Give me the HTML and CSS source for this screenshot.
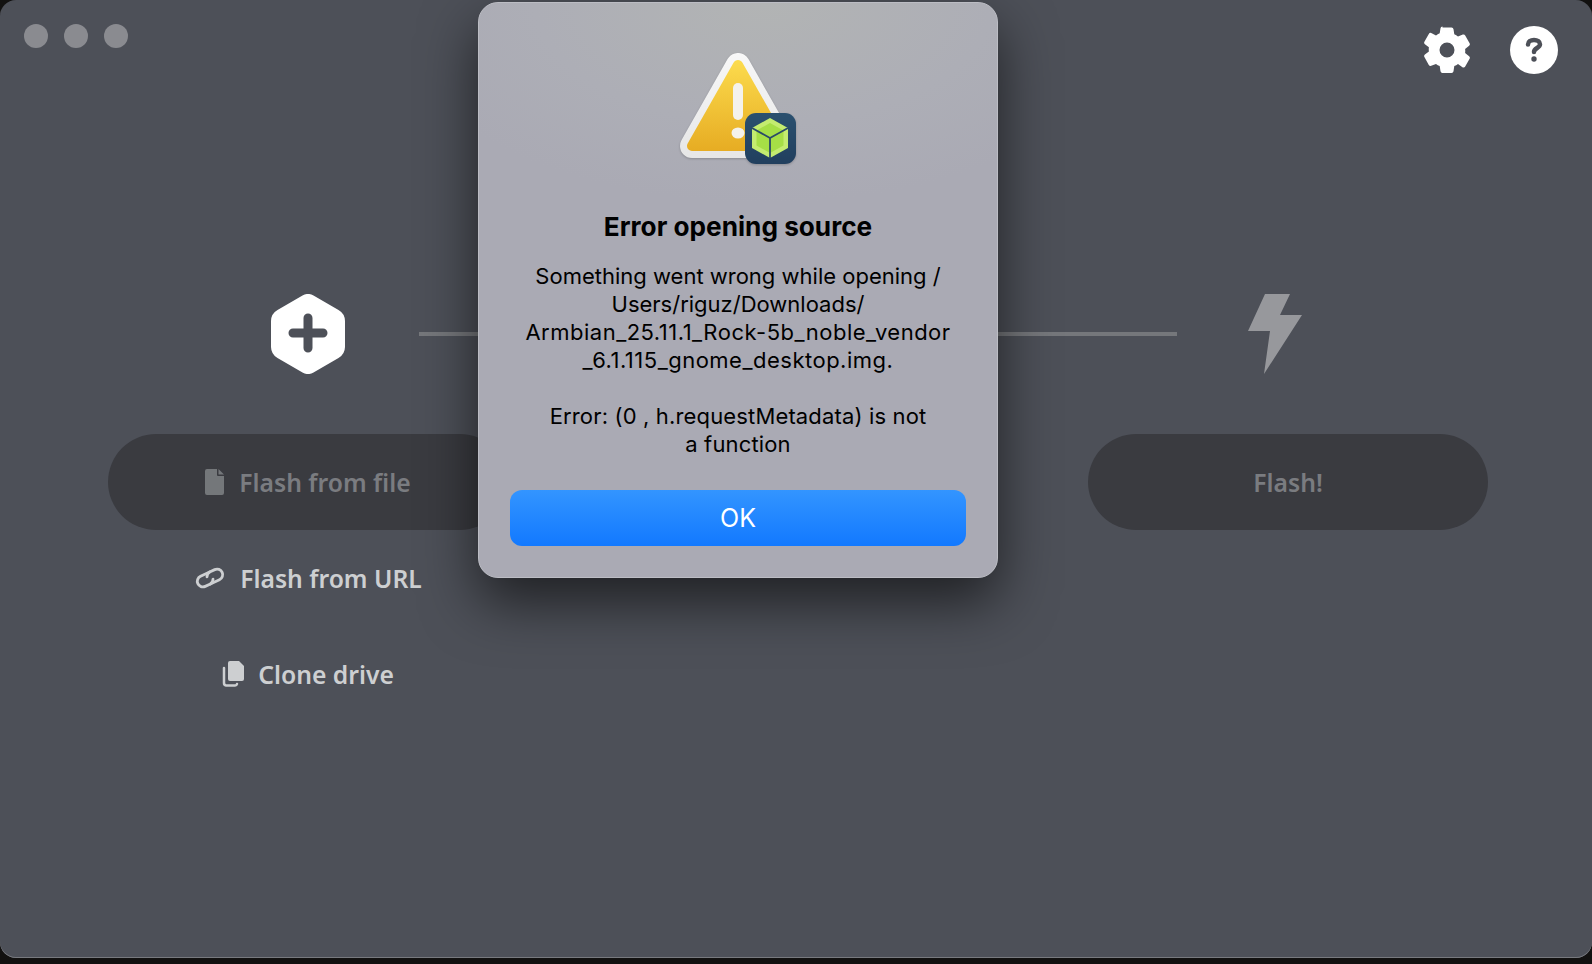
FILE: index.html
```html
<!DOCTYPE html>
<html>
<head>
    <meta charset="utf-8">
    <title>balenaEtcher</title>
    <link rel="stylesheet" href="styles.css">
</head>
<body>
    <div class="window">
        <div class="titlebar">
            <div class="traffic">
                <span class="light"></span>
                <span class="light"></span>
                <span class="light"></span>
            </div>
            <div class="tools">
                <svg class="gear" viewBox="0 0 46 48">
                    <path fill="#fff" fill-rule="evenodd" d="M18.5 1.5h9a2 2 0 0 1 2 1.700l.8 5.100c1.300.6 2.600 1.300 3.700 2.200l4.800-1.900a2 2 0 0 1 2.400.9l4.400 7.800a2 2 0 0 1-.5 2.500l-4 3.100a15 15 0 0 1 0 4.200l4 3.100a2 2 0 0 1 .5 2.500l-4.400 7.800a2 2 0 0 1-2.400.9L34 37.900c-1.100.9-2.400 1.600-3.700 2.200l-.8 5.100a2 2 0 0 1-2 1.700h-9a2 2 0 0 1-2-1.700l-.8-5.100c-1.300-.6-2.600-1.300-3.700-2.200l-4.800 1.900a2 2 0 0 1-2.400-.9L.4 31.100a2 2 0 0 1 .5-2.500l4-3.100a15 15 0 0 1 0-4.200l-4-3.100a2 2 0 0 1-.5-2.500l4.400-7.800a2 2 0 0 1 2.400-.9L12 9.500c1.100-.9 2.400-1.600 3.700-2.200l.8-5.100a2 2 0 0 1 2-1.700zM23 16.500a7.500 7.500 0 1 0 0 15 7.500 7.500 0 0 0 0-15z"/>
                </svg>
                <svg class="help" viewBox="0 0 48 48">
                    <circle cx="24" cy="24" r="24" fill="#fff"/>
                    <path fill="none" stroke="#4d5058" stroke-width="4.500" stroke-linecap="round" stroke-linejoin="round" d="M18 18.500c0-2.800 2.600-4.500 6-4.500s6 1.700 6 4.300c0 3.700-6 3.700-6 7.700"/>
                    <circle cx="24" cy="33" r="2.700" fill="#4d5058"/>
                </svg>
            </div>
        </div>

        <div class="icon-row">
            <svg class="hex" viewBox="0 0 74 80">
                <path fill="#fff" d="M31.500 1.500a11 11 0 0 1 11 0l25 14.500a13 13 0 0 1 6.500 11v26a13 13 0 0 1-6.500 11l-25 14.500a11 11 0 0 1-11 0l-25-14.500A13 13 0 0 1 0 53V27a13 13 0 0 1 6.500-11z"/>
                <path stroke="#4d5058" stroke-width="9" stroke-linecap="round" d="M37 24v30M22 39h30"/>
            </svg>
            <div class="line"></div>
            <svg class="bolt" viewBox="0 0 54 80">
                <path fill="#97989c" d="M17 0h25L32 21h22L16 80l6-43H0z"/>
            </svg>
        </div>

        <div class="pills">
            <div class="pill">
                <svg class="file-icon" viewBox="0 0 19 26">
                    <path fill="#74777a" d="M2 0h10v6a1 1 0 0 0 1 1h6v17a2 2 0 0 1-2 2H2a2 2 0 0 1-2-2V2a2 2 0 0 1 2-2z"/>
                    <path fill="#74777a" d="M13.500 0L19 5.500h-5.500z"/>
                </svg>
                <span>Flash from file</span>
            </div>
            <div class="pill">
                <span>Flash!</span>
            </div>
        </div>

        <div class="links">
            <div class="link">
                <svg class="link-icon" viewBox="0 0 32 26">
                    <g transform="translate(16 13) rotate(-25) scale(1.120)" fill="none" stroke="#cdcfd1" stroke-width="2.500" stroke-linecap="round">
                        <path d="M2-5H-7a5 5 0 0 0 0 10h5a5 5 0 0 0 4-3"/>
                        <path d="M-2 5H7a5 5 0 0 0 0-10H2a5 5 0 0 0-4 3"/>
                    </g>
                </svg>
                <span>Flash from URL</span>
            </div>
            <div class="link">
                <svg class="clone-icon" viewBox="0 0 22 26">
                    <path fill="#cdcfd1" d="M8 0h9l5 5v13a2 2 0 0 1-2 2H8a2 2 0 0 1-2-2V2a2 2 0 0 1 2-2z"/>
                    <path fill="none" stroke="#cdcfd1" stroke-width="2.500" stroke-linecap="round" d="M2 7v15a2.500 2.500 0 0 0 2 2.500h9a2 2 0 0 0 2-1.500"/>
                </svg>
                <span>Clone drive</span>
            </div>
        </div>
    </div>

    <div class="dialog">
        <svg class="alert-icon" viewBox="0 0 140 130">
            <defs>
                <linearGradient id="warn" gradientUnits="userSpaceOnUse" x1="0" y1="6" x2="0" y2="100">
                    <stop offset="0" stop-color="#fcdc4e"/>
                    <stop offset="1" stop-color="#e6ab22"/>
                </linearGradient>
                <linearGradient id="rim" gradientUnits="userSpaceOnUse" x1="0" y1="0" x2="0" y2="105">
                    <stop offset="0" stop-color="#f8f8f8"/>
                    <stop offset="1" stop-color="#e6e6e6"/>
                </linearGradient>
                <linearGradient id="tile" x1="0" y1="0" x2="0" y2="1">
                    <stop offset="0" stop-color="#2a506f"/>
                    <stop offset="1" stop-color="#213f5e"/>
                </linearGradient>
            </defs>
            <polygon points="70,12 116,93 24,93" fill="url(#rim)" stroke="url(#rim)" stroke-width="24" stroke-linejoin="round"/>
            <polygon points="70,12 116,93 24,93" fill="url(#warn)" stroke="url(#warn)" stroke-width="10" stroke-linejoin="round"/>
            <rect x="65" y="30" width="10" height="37" rx="5" fill="#f4f2ec"/>
            <ellipse cx="70" cy="80" rx="6.500" ry="5.500" fill="#f4f2ec"/>
            <rect x="77" y="60" width="51" height="51" rx="11" fill="url(#tile)"/>
            <path fill="#c4ec70" d="M102 65l18 10v20l-18 10-18-10V75z"/>
            <path fill="#a6df46" d="M102 70l13.500 7.500v15L102 100l-13.500-7.500v-15z"/>
            <path fill="none" stroke="#2a4a68" stroke-width="1.800" d="M84 75l18 10 18-10M102 85v20"/>
        </svg>
        <h1 class="dialog-title">Error opening source</h1>
        <p class="dialog-text">Something went wrong while opening /<br>Users/riguz/Downloads/<br><span class="path">Armbian_25.11.1_Rock-5b_noble_vendor<br>_6.1.115_gnome_desktop.img.</span><br><br><span class="error">Error: (0 , h.requestMetadata) is not<br>a function</span></p>
        <button class="dialog-btn">OK</button>
    </div>
</body>
</html>
```

FILE: styles.css
```css
body {
    margin: 0;
    height: 964px;
    overflow: hidden;
    background: #121110;
    font-family: "Noto Sans", sans-serif;
}

.window {
    height: 958px;
    background: #4d5058;
    border-radius: 16px;
    box-shadow: inset 0 -1px 0 #77797e;
}

.titlebar {
    display: flex;
    justify-content: space-between;
    height: 294px;
    padding: 24px 34px 0 24px;
    box-sizing: border-box;
}

.traffic {
    display: flex;
    gap: 16px;
    height: 24px;
}

.light {
    width: 24px;
    height: 24px;
    border-radius: 50%;
    background: #8a8b90;
}

.tools {
    display: flex;
    align-items: flex-start;
    gap: 40px;
    padding-top: 2px;
}

.gear {
    width: 46px;
    height: 48px;
}

.help {
    width: 48px;
    height: 48px;
}

.icon-row {
    display: flex;
    align-items: center;
    height: 80px;
    padding-left: 271px;
}

.hex {
    width: 74px;
    height: 80px;
}

.line {
    width: 758px;
    height: 4px;
    margin: 0 71px 0 74px;
    background: #75777b;
}

.bolt {
    width: 54px;
    height: 80px;
}

.pills {
    display: flex;
    justify-content: space-between;
    padding: 60px 104px 0 108px;
}

.pill {
    display: flex;
    align-items: center;
    justify-content: center;
    gap: 15px;
    width: 400px;
    height: 96px;
    border-radius: 48px;
    background: #3a3b40;
    color: #7a7c80;
    font-size: 24.700px;
    font-weight: 600;
}

.file-icon {
    width: 19px;
    height: 26px;
}

.links {
    width: 400px;
    margin-left: 108px;
    padding-top: 31px;
    color: #cdcfd1;
    font-size: 24.700px;
    font-weight: 600;
}

.link {
    display: flex;
    align-items: center;
    justify-content: center;
    height: 34px;
    margin-bottom: 62px;
    gap: 14px;
}

.link-icon {
    width: 32px;
    height: 26px;
}

.clone-icon {
    width: 22px;
    height: 26px;
}

.dialog {
    position: absolute;
    left: 478px;
    top: 2px;
    width: 520px;
    height: 576px;
    padding: 50px 31px 0;
    box-sizing: border-box;
    border-radius: 20px;
    border: 1px solid #bcbdc4;
    background: radial-gradient(ellipse 380px 200px at 55% 0, #b2b4b4 0%, #adaeb6 60%, #aaaab4 100%);
    box-shadow: 0 24px 56px rgba(0, 0, 0, 0.6);
    font-family: Inter, sans-serif;
    color: #000;
    text-align: center;
}

.alert-icon {
    display: block;
    width: 140px;
    height: 130px;
    margin: 0 auto;
    filter: drop-shadow(0 1px 1px rgba(0, 0, 0, 0.2));
}

.dialog-title {
    margin: 29px 0 0;
    font-size: 26.200px;
    line-height: 30px;
    font-weight: 700;
}

.dialog-text {
    margin: 20px 0 0;
    font-size: 22px;
    line-height: 28px;
}

.path {
    letter-spacing: 0.5px;
}

.error {
    letter-spacing: 0.15px;
}

.dialog-btn {
    display: block;
    width: 456px;
    height: 56px;
    margin-top: 32px;
    padding: 0;
    border: none;
    border-radius: 12px;
    background: linear-gradient(#3395ff, #1279ff);
    color: #fff;
    font-family: Inter, sans-serif;
    font-size: 25px;
}
```
